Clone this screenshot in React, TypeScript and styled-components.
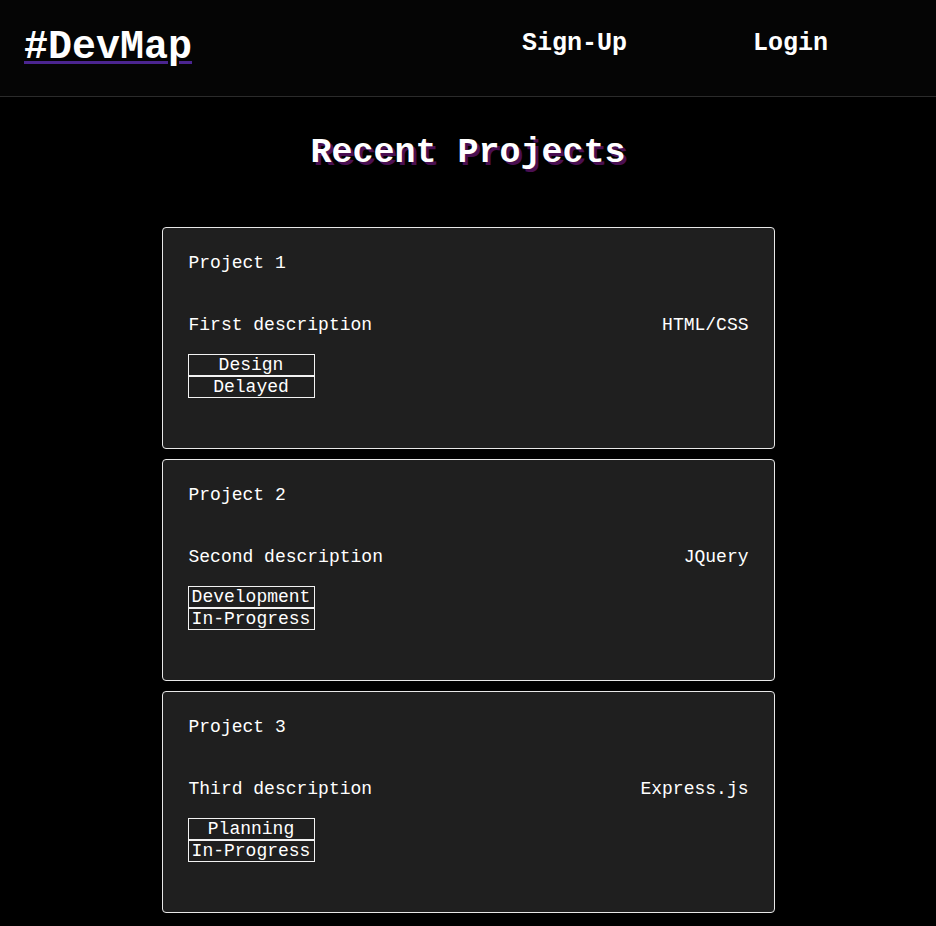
import React from "react";
import styled, { createGlobalStyle } from "styled-components";

const Global = createGlobalStyle`
  html, body { margin: 0; padding: 0; background: #000; }
  body { font-family: "Liberation Mono", "Courier New", monospace; color: #fff; }
  * { box-sizing: border-box; }
`;

const Header = styled.header`
  height: 97px;
  display: flex;
  align-items: flex-start;
  background: #050505;
  border-bottom: 1px solid #2b2b2b;
`;

const Logo = styled.a`
  margin: 25px 0 0 24px;
  font-size: 40px;
  font-weight: bold;
  line-height: 46px;
  color: #fff;
  text-decoration: underline;
  text-decoration-color: #4b2590;
  text-decoration-thickness: 3px;
  text-underline-offset: 3px;
`;

const Nav = styled.nav`
  display: flex;
  margin: 29px 0 0 330px;
  gap: 126px;
`;

const NavLink = styled.a`
  font-size: 25px;
  font-weight: bold;
  line-height: 30px;
  color: #fff;
  text-decoration: none;
`;

const Main = styled.main`
  display: flex;
  flex-direction: column;
  align-items: center;
`;

const Title = styled.h1`
  margin: 33px 0 51px;
  font-size: 35px;
  line-height: 46px;
  font-weight: bold;
  color: #fff;
  text-shadow: 3px 3px 0 #4a0f52;
`;

const List = styled.div`
  display: flex;
  flex-direction: column;
  gap: 10px;
  width: 613px;
`;

const Card = styled.section`
  height: 222px;
  background: #1f1f1f;
  border: 1px solid #e8e8e8;
  border-radius: 4px;
  padding: 25px 25px 0 25px;
  font-size: 18px;
  line-height: 20px;
  color: #fff;
`;

const CardTitle = styled.div`
  height: 20px;
  padding-left: 1px;
`;

const Row = styled.div`
  display: flex;
  justify-content: space-between;
  margin-top: 42px;
  height: 20px;
  padding-left: 1px;
`;

const Tags = styled.div`
  display: flex;
  flex-direction: column;
  width: 127px;
  margin-top: 19px;
`;

const Tag = styled.div`
  border: 1px solid #f2f2f2;
  height: 22px;
  line-height: 20px;
  text-align: center;
  white-space: nowrap;
`;

const projects = [
  { name: "Project 1", desc: "First description", tech: "HTML/CSS", tags: ["Design", "Delayed"] },
  { name: "Project 2", desc: "Second description", tech: "JQuery", tags: ["Development", "In-Progress"] },
  { name: "Project 3", desc: "Third description", tech: "Express.js", tags: ["Planning", "In-Progress"] },
];

export default function App() {
  return (
    <>
      <Global />
      <Header>
        <Logo>#DevMap</Logo>
        <Nav>
          <NavLink>Sign-Up</NavLink>
          <NavLink>Login</NavLink>
        </Nav>
      </Header>
      <Main>
        <Title>Recent Projects</Title>
        <List>
          {projects.map((p) => (
            <Card key={p.name}>
              <CardTitle>{p.name}</CardTitle>
              <Row>
                <span>{p.desc}</span>
                <span>{p.tech}</span>
              </Row>
              <Tags>
                {p.tags.map((t) => (
                  <Tag key={t}>{t}</Tag>
                ))}
              </Tags>
            </Card>
          ))}
        </List>
      </Main>
    </>
  );
}
